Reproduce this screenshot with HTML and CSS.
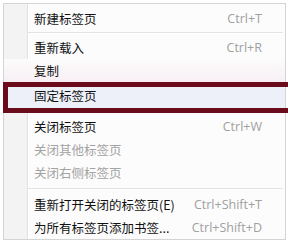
FILE: index.html
```html
<!DOCTYPE html>
<html lang="zh-CN">
  <head>
    <meta charset="UTF-8" />
    <meta name="viewport" content="width=device-width, initial-scale=1.0" />
    <title>标签页菜单</title>
    <link rel="stylesheet" href="styles.css">
  </head>
  <body>
    <div class="menu">
      <div class="menu-item">
        <span class="label">新建标签页</span>
        <span class="shortcut">Ctrl+T</span>
      </div>
      <div class="separator"></div>
      <div class="menu-item">
        <span class="label">重新载入</span>
        <span class="shortcut">Ctrl+R</span>
      </div>
      <div class="menu-item tinted">
        <span class="label">复制</span>
      </div>
      <div class="menu-item pinned">
        <span class="label">固定标签页</span>
        <span class="mark"></span>
      </div>
      <div class="menu-item">
        <span class="label">关闭标签页</span>
        <span class="shortcut">Ctrl+W</span>
      </div>
      <div class="menu-item disabled">
        <span class="label">关闭其他标签页</span>
      </div>
      <div class="menu-item disabled">
        <span class="label">关闭右侧标签页</span>
      </div>
      <div class="separator lower"></div>
      <div class="menu-item">
        <span class="label">重新打开关闭的标签页(E)</span>
        <span class="shortcut">Ctrl+Shift+T</span>
      </div>
      <div class="menu-item">
        <span class="label">为所有标签页添加书签...</span>
        <span class="shortcut">Ctrl+Shift+D</span>
      </div>
    </div>
  </body>
</html>
```

FILE: styles.css
```css
body {
  font-family: "Noto Sans CJK SC", "Liberation Sans", sans-serif;
  margin: 0;
  padding: 0;
  background-color: #fff;
  overflow: hidden;
}
.menu {
  margin: 3px 2px 0 3px;
  padding: 3px 0 0 0;
  border: 1px solid #d4d4d4;
  background: linear-gradient(to right, #f3f3f3 0, #f3f3f3 23px, #e1e1e1 23px, #e1e1e1 24px, #fff 24px, #fff 25px, #fcfcfc 25px);
}
.menu-item {
  position: relative;
  display: flex;
  justify-content: space-between;
  align-items: center;
  height: 23px;
  padding: 0 23px 0 30px;
  font-size: 12.5px;
  color: #111;
}
.menu-item .label {
  line-height: 23px;
}
.shortcut {
  font-family: "Open Sans", "Liberation Sans", sans-serif;
  font-size: 12.5px;
  color: #a0a0a0;
}
.disabled {
  color: #a3a3a3;
}
.tinted {
  background: linear-gradient(to bottom, #fcfcfc, #f8eff4);
}
.pinned {
  height: 31px;
  margin-bottom: 2px;
  padding-bottom: 4px;
  box-sizing: border-box;
  background-color: #eef0f9;
}
.mark {
  position: absolute;
  top: 0;
  bottom: 0;
  left: -1px;
  right: -8px;
  border: 5px solid #6b0c1d;
  border-right: none;
}
.separator {
  height: 1px;
  margin: 2px 2px 2px 24px;
  background-color: #e2e2e2;
  border-bottom: 1px solid #fff;
}
.separator.lower {
  margin-top: 4px;
  margin-bottom: 3px;
}
```
